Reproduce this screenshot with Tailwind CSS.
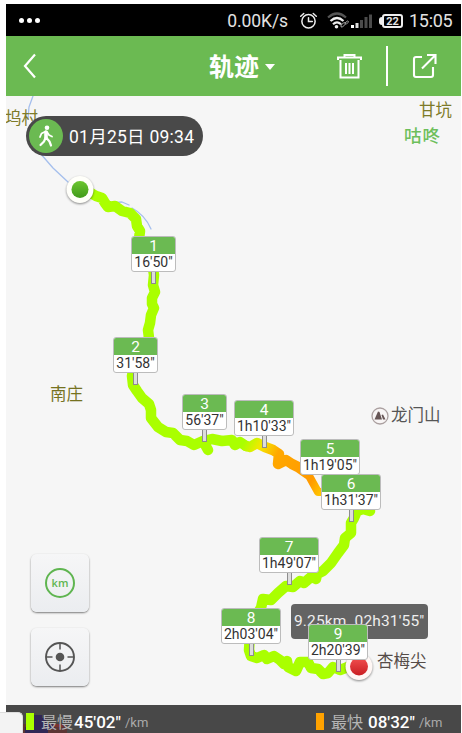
<!DOCTYPE html>
<html lang="zh-CN">
<head>
<meta charset="utf-8">
<title>轨迹</title>
<script src="https://cdn.jsdelivr.net/npm/@tailwindcss/browser@4"></script>
</head>
<body class="bg-white">
<div class="relative h-[733px] w-[462px] overflow-hidden bg-white pt-1 pl-1.5 font-['Roboto','Noto_Sans_CJK_SC',sans-serif]">
  <div class="flex h-[729px] w-[455px] flex-col">
    <!-- status bar -->
    <div class="flex h-8 shrink-0 items-center bg-black pr-2 pl-[13px] text-[#e2e2e2]">
      <div class="flex gap-[3px]"><i class="size-[5px] rounded-full bg-white"></i><i class="size-[5px] rounded-full bg-white"></i><i class="size-[5px] rounded-full bg-white"></i></div>
      <span class="ml-auto pt-[2px] text-[17.5px] leading-8 tracking-[-0.1px]">0.00K/s</span>
      <svg class="ml-[11px]" width="19" height="19" viewBox="0 0 20 20" fill="none" stroke="#ececec" stroke-width="1.6" stroke-linecap="round"><circle cx="10" cy="10.8" r="7"/><path d="M10 7v4h4M1.8 5.5 5 2.6M18.2 5.5 15 2.6"/></svg>
      <svg class="ml-[9px] mt-0.5" width="45" height="18" viewBox="0 0 45 18" fill="none"><path d="M1 5.5Q10-2.5 19 5.5" stroke="#555" stroke-width="2.2"/><path d="M3.5 9Q10 3 16.5 9M6 12.3Q10 8.6 14 12.3" stroke="#eee" stroke-width="2.2"/><circle cx="9.5" cy="14.7" r="1.8" fill="#eee"/><path d="m14 13 2.5-2q2-1 2 1l-3 3q-2 1-1.500-2m4-2 2.500-2q1.500 0 .5 1.500l-2 2" stroke="#aaa" stroke-width="1"/><path d="M24 13h3v3h-3z" fill="#fff"/><path d="M28.500 11h3v5h-3z" fill="#ddd"/><path d="M33 8h3v8h-3zM37.500 5h3v11h-3zM42 2.500h3V16h-3z" fill="#4b4b4b"/></svg>
      <div class="ml-[7px] mt-0.5 flex items-center"><i class="h-2 w-[3px] rounded-l-sm bg-[#eee]"></i><span class="flex h-[14px] w-[21px] items-center justify-center rounded-[3px] border-2 border-[#eee] text-[11px] font-bold leading-none">22</span></div>
      <span class="ml-[6px] w-[44px] pt-[2px] text-[18px] leading-8 tracking-[-0.3px] whitespace-nowrap">15:05</span>
    </div>
    <!-- title bar -->
    <header class="flex h-[60px] shrink-0 items-center bg-[#6bba52] pl-[17px] text-white">
      <svg width="14" height="26" viewBox="0 0 14 26" fill="none" stroke="#fff" stroke-width="2.2"><path d="M12 1.500 2 13l10 11.500"/></svg>
      <h1 class="ml-[172px] w-[50px] pt-1 text-[25px] font-bold leading-[56px] whitespace-nowrap">轨迹</h1>
      <i class="ml-[6px] mt-px border-x-[5px] border-t-[6px] border-x-transparent border-t-white"></i>
      <svg class="ml-[62px]" width="25" height="27" viewBox="0 0 25 27" fill="none" stroke="#fff" stroke-width="2"><path d="M1 7V4.500h23V7M7.500 4.500V2h10v2.500M3.500 7v17.500h18V7M9 10v11M12.500 10v11M16 10v11"/></svg>
      <i class="ml-[24px] h-10 w-0.5 bg-white"></i>
      <svg class="ml-[23px]" width="26" height="26" viewBox="0 0 26 26" fill="none" stroke="#fff" stroke-width="2.100"><path d="M11 4H5Q3 4 3 6v16q0 2 2 2h15q2 0 2-2v-8M11 15.500 24 2.500M16 2h8.500v9"/></svg>
    </header>
    <!-- map canvas, positioned in window coordinates -->
    <main class="relative h-[609px] shrink-0 overflow-hidden bg-[#f6f6f6]">
      <div class="absolute -top-24 -left-1.5 h-[733px] w-[462px]">
        <svg class="absolute inset-0" width="462" height="733" viewBox="0 0 462 733" fill="none" stroke-linecap="round" stroke-linejoin="round">
          <defs>
            <linearGradient id="pace" gradientUnits="userSpaceOnUse" x1="242" y1="446" x2="322" y2="490"><stop stop-color="#af0"/><stop offset=".18" stop-color="#f5e800"/><stop offset=".38" stop-color="#ffa800"/><stop offset=".85" stop-color="#ff9a00"/><stop offset="1" stop-color="#ffc400"/></linearGradient>
            <linearGradient id="go" x2="0" y2="1"><stop stop-color="#6cc62f"/><stop offset="1" stop-color="#419a1b"/></linearGradient>
            <linearGradient id="stop" x2="0" y2="1"><stop stop-color="#f25050"/><stop offset="1" stop-color="#c91d22"/></linearGradient>
          </defs>
          <path d="M33 96 29 107 28 119M40 153 53 168 68 182M110 203l12-1 7 3M132 208q13 7 19 21" stroke="#a5bfed" stroke-width="1.300"/>
          <path d="M89 192 96 196 102 198 105 203 108 207 115 206 122 211 130 213 136 219 137 226 140 231 139 239 147 250 152 262 154 275 153 285 155 292 152 298 152 304 154 308 151 315 150 323 148 330 149 338 141 350 135 360 132 376 133 385 137 391 142 398 149 404 151 410 151 418 158 427 166 432 173 433 180 440 187 441 194 445 203 441 208 450 203 441 212 439 222 441 232 440 235 445 240 442 246 446" stroke="#af0" stroke-width="10.500"/>
          <path d="M246 446 250 447 257 443 265 447 273 450 279 454 278 464 286 460 292 464 298 467 308 474" stroke="url(#pace)" stroke-width="10.500"/>
          <path d="M308 474 313 483 318 492 330 492" stroke="url(#pace)" stroke-width="8"/>
          <path d="M370 511 363 509 357 511 354 518 351 523 351 533 345 538 344 545 338 553 331 563 323 571 317 574 316 579 311 577 304 583 300 581 293 587 286 586 278 593 271 600 263 599 261 608 253 620 250 635 249 650 251 656 257 658 264 655 267 659 274 656 280 660 284 664 287 661 288 667 296 671 300 662 308 662 311 668 318 669 323 674 328 673 333 667 340 670 348 667" stroke="#af0" stroke-width="10.500"/>
        </svg>

        <div class="absolute top-[108px] left-[5px] text-[16.5px] leading-[22px] text-[#7d7a28]">坞村</div>
        <div class="absolute top-[100px] left-[419px] text-[16.5px] leading-[22px] text-[#7d7a28]">甘坑</div>
        <div class="absolute top-[125px] left-[404px] text-[17.5px] leading-[22px] font-medium tracking-[1px] text-[#6dbf5b]">咕咚</div>
        <div class="absolute top-[384px] left-[50px] text-[16.5px] leading-[22px] text-[#75721f]">南庄</div>
        <div class="absolute top-[405px] left-[371px] flex items-center gap-[2px] text-[16.5px] leading-[22px] text-[#555]">
          <svg width="18" height="18" viewBox="0 0 18 18"><circle cx="9" cy="9" r="8" fill="#f8f5f5" stroke="#aba0a0" stroke-width="1.300"/><path d="M3.500 12.500 7 4.500 8.500 5l2.500 7.500zM10.500 8l1.500-.5 2.500 5H12z" fill="#665555"/></svg>
          <span>龙门山</span>
        </div>
        <div class="absolute top-[651px] left-[377px] text-[16.5px] leading-[22px] text-[#554c48]">杏梅尖</div>

        <!-- activity start time -->
        <div class="absolute top-[116px] left-[26px] flex h-10 w-[177px] items-center rounded-full bg-[#494949] pl-[3px] text-white">
          <span class="flex size-[34px] items-center justify-center rounded-full bg-[#6bba52]"><svg width="16" height="22" viewBox="0 0 16 22" fill="none" stroke="#fff" stroke-linecap="round" stroke-linejoin="round"><circle cx="9" cy="2.800" r="2.300" fill="#fff" stroke="none"/><path d="M8 7v6" stroke-width="3.600"/><path d="M7.500 6.500 3.500 8.500 2 12M9 7l2 3 3 1.500" stroke-width="1.800"/><path d="M7.500 13 6 16.500 2.500 20M8.500 13l3 3.500 1.500 4" stroke-width="2.200"/></svg></span>
          <span class="ml-[6px] pt-0.5 text-[17.5px] tracking-[0.25px] whitespace-nowrap">01月25日 09:34</span>
        </div>

        <!-- total distance -->
        <div class="absolute top-[604px] left-[291px] h-[35px] w-[137px] rounded-[4px] bg-[#636363] pl-[3px] text-[15.5px] leading-[35px] tracking-[0.15px] whitespace-pre text-[#eee]">9.25km  02h31'55"</div>

        <svg class="absolute top-[170px] left-[60px] drop-shadow-[0_1px_1px_rgba(0,0,0,0.45)]" width="40" height="40" viewBox="0 0 40 40"><circle cx="20" cy="19.500" r="13.500" fill="#fffffa"/><circle cx="20" cy="19.500" r="8.500" fill="url(#go)"/></svg>
        <svg class="absolute top-[647px] left-[339px] drop-shadow-[0_1px_1px_rgba(0,0,0,0.45)]" width="40" height="40" viewBox="0 0 40 40"><circle cx="20" cy="19.500" r="13.500" fill="#fff7f5"/><circle cx="20" cy="19.500" r="9" fill="url(#stop)"/></svg>

        <!-- kilometre pins -->
        <div class="absolute top-[236px] left-[131px] flex w-[45px] flex-col items-center text-[14px]"><div class="h-9 w-full rounded-[3px] border border-[#bcbcbc] bg-white text-center whitespace-nowrap"><div class="h-[17px] rounded-t-[2px] bg-[#6bba52] text-[15.5px] leading-[19px] text-white">1</div><div class="leading-[17px] text-[#333]">16'50"</div></div><i class="h-3 w-[5px] border border-t-0 border-[#8d8d8d] bg-[#ddd]"></i></div>
        <div class="absolute top-[337px] left-[113px] flex w-[45px] flex-col items-center text-[14px]"><div class="h-9 w-full rounded-[3px] border border-[#bcbcbc] bg-white text-center whitespace-nowrap"><div class="h-[17px] rounded-t-[2px] bg-[#6bba52] text-[15.5px] leading-[19px] text-white">2</div><div class="leading-[17px] text-[#333]">31'58"</div></div><i class="h-3 w-[5px] border border-t-0 border-[#8d8d8d] bg-[#ddd]"></i></div>
        <div class="absolute top-[394px] left-[182px] flex w-[45px] flex-col items-center text-[14px]"><div class="h-9 w-full rounded-[3px] border border-[#bcbcbc] bg-white text-center whitespace-nowrap"><div class="h-[17px] rounded-t-[2px] bg-[#6bba52] text-[15.5px] leading-[19px] text-white">3</div><div class="leading-[17px] text-[#333]">56'37"</div></div><i class="h-3 w-[5px] border border-t-0 border-[#8d8d8d] bg-[#ddd]"></i></div>
        <div class="absolute top-[400px] left-[234px] flex w-[60px] flex-col items-center text-[14px]"><div class="h-9 w-full rounded-[3px] border border-[#bcbcbc] bg-white text-center whitespace-nowrap"><div class="h-[17px] rounded-t-[2px] bg-[#6bba52] text-[15.5px] leading-[19px] text-white">4</div><div class="leading-[17px] text-[#333]">1h10'33"</div></div><i class="h-3 w-[5px] border border-t-0 border-[#8d8d8d] bg-[#ddd]"></i></div>
        <div class="absolute top-[439px] left-[300px] flex w-[60px] flex-col items-center text-[14px]"><div class="h-9 w-full rounded-[3px] border border-[#bcbcbc] bg-white text-center whitespace-nowrap"><div class="h-[17px] rounded-t-[2px] bg-[#6bba52] text-[15.5px] leading-[19px] text-white">5</div><div class="leading-[17px] text-[#333]">1h19'05"</div></div></div>
        <div class="absolute top-[474px] left-[321px] flex w-[60px] flex-col items-center text-[14px]"><div class="h-9 w-full rounded-[3px] border border-[#bcbcbc] bg-white text-center whitespace-nowrap"><div class="h-[17px] rounded-t-[2px] bg-[#6bba52] text-[15.5px] leading-[19px] text-white">6</div><div class="leading-[17px] text-[#333]">1h31'37"</div></div><i class="h-3 w-[5px] border border-t-0 border-[#8d8d8d] bg-[#ddd]"></i></div>
        <div class="absolute top-[537px] left-[259px] flex w-[60px] flex-col items-center text-[14px]"><div class="h-9 w-full rounded-[3px] border border-[#bcbcbc] bg-white text-center whitespace-nowrap"><div class="h-[17px] rounded-t-[2px] bg-[#6bba52] text-[15.5px] leading-[19px] text-white">7</div><div class="leading-[17px] text-[#333]">1h49'07"</div></div><i class="h-3 w-[5px] border border-t-0 border-[#8d8d8d] bg-[#ddd]"></i></div>
        <div class="absolute top-[608px] left-[221px] flex w-[60px] flex-col items-center text-[14px]"><div class="h-9 w-full rounded-[3px] border border-[#bcbcbc] bg-white text-center whitespace-nowrap"><div class="h-[17px] rounded-t-[2px] bg-[#6bba52] text-[15.5px] leading-[19px] text-white">8</div><div class="leading-[17px] text-[#333]">2h03'04"</div></div><i class="h-3 w-[5px] border border-t-0 border-[#8d8d8d] bg-[#ddd]"></i></div>
        <div class="absolute top-[624px] left-[308px] flex w-[60px] flex-col items-center text-[14px]"><div class="h-9 w-full rounded-[3px] border border-[#bcbcbc] bg-white text-center whitespace-nowrap"><div class="h-[17px] rounded-t-[2px] bg-[#6bba52] text-[15.5px] leading-[19px] text-white">9</div><div class="leading-[17px] text-[#333]">2h20'39"</div></div><i class="h-3 w-[5px] border border-t-0 border-[#8d8d8d] bg-[#ddd]"></i></div>

        <!-- map controls -->
        <div class="absolute top-[554px] left-[31px] flex flex-col gap-4">
          <div class="flex size-[58px] items-center justify-center rounded-[6px] bg-linear-to-b from-[#f6f6f7] to-[#ebedf0] shadow-[0_1px_2px_rgba(0,0,0,0.5)]"><span class="flex size-[30px] items-center justify-center rounded-full border-2 border-[#5fb550] pb-0.5 font-['Open_Sans','Noto_Sans',sans-serif] text-[11px] font-semibold leading-none text-[#5fb550]">km</span></div>
          <div class="flex size-[58px] items-center justify-center rounded-[6px] bg-linear-to-b from-[#f6f6f7] to-[#ebedf0] shadow-[0_1px_2px_rgba(0,0,0,0.5)]"><svg width="30" height="30" viewBox="0 0 30 30" fill="none" stroke="#555" stroke-width="1.900"><circle cx="15" cy="15" r="14"/><circle cx="15" cy="15" r="4.300" fill="#555" stroke="none"/><path d="M15 1v6.500M15 22.500V29M1 15h6.500M22.500 15H29" stroke-width="1.500"/></svg></div>
        </div>
      </div>
    </main>
    <!-- pace legend -->
    <footer class="relative flex h-7 shrink-0 items-center overflow-hidden bg-[#484848] pt-[5px] pl-5 whitespace-nowrap text-white">
      <svg class="absolute top-[7px] left-4" width="45" height="21" viewBox="0 0 45 21"><path d="M0 12h45v9H0z" fill="#5c3534"/><path d="M12 3h8v3h4v6h9v5h-7v4H12zM3 15h9v6H3z" fill="#302755"/><path d="M31 12h10v3H31z" fill="#783331"/></svg>
      <i class="relative h-[17px] w-2 bg-[#af0]"></i>
      <span class="relative ml-[7px] w-[33px] pt-0.5 text-[16px] leading-6 text-[#b5b5b5]">最慢</span>
      <span class="relative w-[51px] pt-px text-[17px] font-medium leading-6">45'02"</span>
      <span class="relative w-[26px] pt-[3px] text-[13px] leading-6 text-[#aaa]">/km</span>
      <i class="ml-[165px] h-[17px] w-2 bg-[#ffa200]"></i>
      <span class="ml-[7px] w-[37px] pt-0.5 text-[16px] leading-6 text-[#b5b5b5]">最快</span>
      <span class="w-[51px] pt-px text-[17px] font-medium leading-6">08'32"</span>
      <span class="pt-[3px] text-[13px] leading-6 text-[#aaa]">/km</span>
    </footer>
  </div>
  <div class="absolute bottom-0 left-0 h-[21px] w-[23px] rounded-tr-[5px] border-t border-r border-[#ddd] bg-[#f3f3f3]"></div>
</div>
</body>
</html>
